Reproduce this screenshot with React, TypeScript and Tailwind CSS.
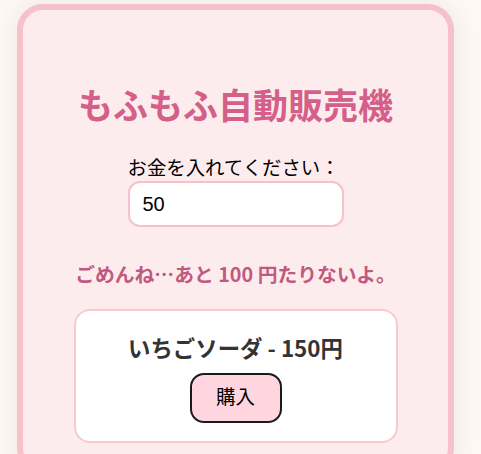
import React, { useState } from 'react';

const PRICE = 150;

const VendingMachine: React.FC = () => {
  const [money, setMoney] = useState('50');
  const short = PRICE - (Number(money) || 0);

  return (
    <div className="min-h-[454px] bg-[#fdf8f4] pt-[4px] pl-[17px] font-['Noto_Sans_CJK_JP','Noto_Sans',sans-serif]">
      <div className="w-[437px] min-h-[470px] rounded-[26px] border-[6px] border-[#f6c1cb] bg-[#fdecee] shadow-[0_0_22px_rgba(120,90,80,0.12)] pt-[76px]">
        <h1 className="text-center text-[35px] leading-[35px] font-bold text-[#d45f89]">
          もふもふ自動販売機
        </h1>

        <div className="w-[216px] mx-auto mt-[38px]">
          <label className="block whitespace-nowrap text-[19.4px] leading-[19.4px] text-black font-['Liberation_Sans','Noto_Sans_CJK_JP',sans-serif]">
            お金を入れてください：
          </label>
          <input
            type="text"
            value={money}
            onChange={(e) => setMoney(e.target.value)}
            className="mt-[3px] block w-[216px] h-[46px] rounded-[12px] border-2 border-[#f6c1cb] bg-white pl-[13px] text-[20px] text-black outline-none font-['Liberation_Sans',sans-serif]"
          />
        </div>

        <p className="mt-[37px] text-center whitespace-nowrap text-[19.8px] leading-[19.8px] font-bold text-[#c1597e]">
          ごめんね…あと {short} 円たりないよ。
        </p>

        <div className="w-[324px] mx-auto mt-[25px] rounded-[16px] border-2 border-[#f8c9d1] bg-white pt-[25px] pb-[18px] flex flex-col items-center">
          <h2 className="text-[22.4px] leading-[22.4px] font-bold text-[#333333]">
            いちごソーダ - {PRICE}円
          </h2>
          <button className="mt-[14px] w-[92px] h-[50px] rounded-[14px] border-2 border-[#1a1a1a] bg-[#ffd6e0] text-[19.5px] text-black font-['Liberation_Sans','Noto_Sans_CJK_JP',sans-serif]">
            購入
          </button>
        </div>
      </div>
    </div>
  );
};

export default function App() {
  return <VendingMachine />;
}
